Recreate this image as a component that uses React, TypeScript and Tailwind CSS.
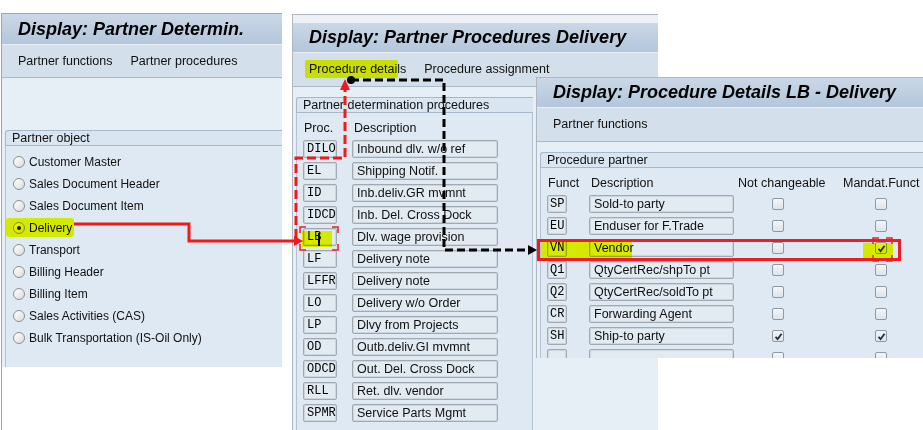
import React from "react";

const partnerObjects = [
  "Customer Master",
  "Sales Document Header",
  "Sales Document Item",
  "Delivery",
  "Transport",
  "Billing Header",
  "Billing Item",
  "Sales Activities (CAS)",
  "Bulk Transportation (IS-Oil Only)",
];

const procedures: [string, string][] = [
  ["DILO", "Inbound dlv. w/o ref"],
  ["EL", "Shipping Notif."],
  ["ID", "Inb.deliv.GR mvmnt"],
  ["IDCD", "Inb. Del. Cross Dock"],
  ["LB", "Dlv. wage provision"],
  ["LF", "Delivery note"],
  ["LFFR", "Delivery note"],
  ["LO", "Delivery w/o Order"],
  ["LP", "Dlvy from Projects"],
  ["OD", "Outb.deliv.GI mvmnt"],
  ["ODCD", "Out. Del. Cross Dock"],
  ["RLL", "Ret. dlv. vendor"],
  ["SPMR", "Service Parts Mgmt"],
];

const partners = [
  { f: "SP", d: "Sold-to party", nc: false, m: false },
  { f: "EU", d: "Enduser for F.Trade", nc: false, m: false },
  { f: "VN", d: "Vendor", nc: false, m: true },
  { f: "Q1", d: "QtyCertRec/shpTo pt", nc: false, m: false },
  { f: "Q2", d: "QtyCertRec/soldTo pt", nc: false, m: false },
  { f: "CR", d: "Forwarding Agent", nc: false, m: false },
  { f: "SH", d: "Ship-to party", nc: true, m: true },
  { f: "", d: "", nc: false, m: false },
];

function TitleBar({ title, h = "h-[31px]" }: { title: string; h?: string }) {
  return (
    <div
      className={`flex ${h} shrink-0 items-center border-b border-[#e9eff5] bg-gradient-to-b from-[#cad8e7] to-[#b3c6db] pl-[16px] text-[18px] font-bold italic text-black`}
    >
      {title}
    </div>
  );
}

function Toolbar({ items, h = "h-[33px]" }: { items: string[]; h?: string }) {
  return (
    <div
      className={`flex ${h} shrink-0 items-center gap-[18px] border-b border-[#a9b9c9] bg-[#d3dfea] pl-[16px] text-[12.5px] text-[#111]`}
    >
      {items.map((t) => (
        <span key={t}>{t}</span>
      ))}
    </div>
  );
}

function GroupHeader({ title }: { title: string }) {
  return (
    <div className="flex h-[16px] shrink-0 items-center rounded-tl-[3px] border-l border-t border-b border-[#a6b8ca] bg-[#d9e5f0] pl-[6px] text-[12.5px] text-[#111]">
      {title}
    </div>
  );
}

function Field({ children, className = "" }: { children?: React.ReactNode; className?: string }) {
  return (
    <div
      className={`flex h-[18px] shrink-0 items-center rounded-[2px] border border-[#a3a9b0] bg-[#e2eaf2] shadow-[inset_0_0_0_1px_#cdd5dd] ${className}`}
    >
      {children}
    </div>
  );
}

function Radio({ on }: { on?: boolean }) {
  return (
    <span className="flex h-[12px] w-[12px] items-center justify-center rounded-full border border-[#8f8f8f] bg-gradient-to-br from-[#ffffff] to-[#dcdcdc]">
      {on && <span className="h-[4px] w-[4px] rounded-full bg-[#1a1a1a]" />}
    </span>
  );
}

function Check({ on }: { on?: boolean }) {
  return (
    <span className="flex h-[12px] w-[12px] items-center justify-center rounded-[2px] border border-[#8e99a4] bg-gradient-to-b from-[#f3f6f9] to-[#dde4eb]">
      {on && (
        <svg width="9" height="9" viewBox="0 0 9 9">
          <path d="M1.5 4.8 L3.6 7 L7.6 1.8" fill="none" stroke="#2b2b33" strokeWidth="1.8" />
        </svg>
      )}
    </span>
  );
}

function Corners({ x, y, w, h, l }: { x: number; y: number; w: number; h: number; l: number }) {
  const d = [
    `M${x} ${y + l} V${y} H${x + l}`,
    `M${x + w - l} ${y} H${x + w} V${y + l}`,
    `M${x} ${y + h - l} V${y + h} H${x + l}`,
    `M${x + w - l} ${y + h} H${x + w} V${y + h - l}`,
  ].join(" ");
  return <path d={d} fill="none" stroke="#ee1c25" strokeWidth="1.5" />;
}

export default function App() {
  const red = "#f01a1a";
  return (
    <div className="relative h-[430px] w-[923px] overflow-hidden bg-white font-['Liberation_Sans',Arial,sans-serif] text-black">
      {/* window 1 */}
      <div className="absolute left-[1px] top-[13px] flex h-[417px] w-[281px] flex-col border-l border-t border-[#a0a6ad]">
        <TitleBar title="Display: Partner Determin." />
        <Toolbar items={["Partner functions", "Partner procedures"]} />
        <div className="flex h-[289px] shrink-0 flex-col bg-[#e6eef6] pl-[3px] pt-[52px]">
          <GroupHeader title="Partner object" />
          <div className="flex flex-1 flex-col border-l border-[#b3c3d3] bg-[#dfe9f3] pl-[7px] pt-[5px]">
            {partnerObjects.map((p) => (
              <div key={p} className="flex h-[22px] shrink-0 items-center gap-[4px] text-[12px] text-[#111]">
                <Radio on={p === "Delivery"} />
                <span>{p}</span>
              </div>
            ))}
          </div>
        </div>
      </div>

      {/* window 2 */}
      <div className="absolute left-[292px] top-[14px] flex h-[416px] w-[366px] flex-col border-l border-t border-[#b0b7bf]">
        <div className="h-[8px] shrink-0 bg-[#edf1f5]" />
        <TitleBar title="Display: Partner Procedures Delivery" h="h-[30px]" />
        <Toolbar items={["Procedure details", "Procedure assignment"]} h="h-[34px]" />
        <div className="flex flex-1 flex-col bg-[#e6eef6] pl-[3px] pt-[10px]">
          <div className="flex w-[237px] flex-1 flex-col">
            <GroupHeader title="Partner determination procedures" />
            <div className="flex flex-1 flex-col border-l border-r border-[#b3c3d3] bg-[#dfe9f3]">
              <div className="flex h-[27px] shrink-0 items-center pl-[7px] pt-[3px] text-[12.5px] text-[#111]">
                <span className="w-[50px]">Proc.</span>
                <span>Description</span>
              </div>
              <div className="flex flex-col gap-[4px]">
                {procedures.map(([c, d]) => (
                  <div key={c} className="flex gap-[15px] pl-[6px]">
                    <Field className="w-[34px] pl-[3px] font-['Liberation_Mono',monospace] text-[12px]">{c}</Field>
                    <Field className="w-[146px] pl-[4px] text-[12.5px] text-[#111]">{d}</Field>
                  </div>
                ))}
              </div>
            </div>
          </div>
        </div>
      </div>

      {/* window 3 */}
      <div className="absolute left-[536px] top-[77px] flex h-[281px] w-[387px] flex-col overflow-hidden border-l border-t border-[#b0b7bf]">
        <TitleBar title="Display: Procedure Details LB - Delivery" h="h-[30px]" />
        <Toolbar items={["Partner functions"]} h="h-[34px]" />
        <div className="flex flex-1 flex-col bg-[#e6eef6] pl-[3px] pt-[10px]">
          <GroupHeader title="Procedure partner" />
          <div className="flex flex-1 flex-col border-l border-[#b3c3d3] bg-[#dfe9f3]">
            <div className="flex h-[27px] shrink-0 items-center pl-[7px] pt-[3px] text-[12.5px] text-[#111]">
              <span className="w-[43px]">Funct</span>
              <span className="w-[147px]">Description</span>
              <span className="w-[105px]">Not changeable</span>
              <span>Mandat.Funct</span>
            </div>
            <div className="flex flex-col gap-[4px]">
              {partners.map((p, i) => (
                <div key={i} className="flex shrink-0 items-center pl-[6px]">
                  <Field className="w-[20px] pl-[2px] font-['Liberation_Mono',monospace] text-[12px]">{p.f}</Field>
                  <Field className="ml-[22px] w-[145px] pl-[4px] text-[12.5px] text-[#111]">{p.d}</Field>
                  <div className="ml-[4px] flex w-[80px] justify-center">
                    <Check on={p.nc} />
                  </div>
                  <div className="ml-[25px] flex w-[76px] justify-center">
                    <Check on={p.m} />
                  </div>
                </div>
              ))}
            </div>
          </div>
        </div>
      </div>

      {/* marker highlights */}
      <div className="absolute left-[6px] top-[218px] h-[19px] w-[68px] rounded-[3px] bg-[#f2ff00] mix-blend-multiply" />
      <div className="absolute left-[305px] top-[60px] h-[18px] w-[93px] rounded-[2px] bg-[#f2ff00] mix-blend-multiply" />
      <div className="absolute left-[302px] top-[231px] h-[16px] w-[30px] bg-[#f2ff00] mix-blend-multiply" />
      <div className="absolute left-[541px] top-[242px] h-[18px] w-[91px] bg-[#f2ff00] mix-blend-multiply" />
      <div className="absolute left-[863px] top-[243px] h-[15px] w-[30px] bg-[#f2ff00] mix-blend-multiply" />

      {/* arrows and marks */}
      <svg className="pointer-events-none absolute inset-0" width="923" height="430">
        <polyline points="74,224 189,224 189,241 295,241" fill="none" stroke={red} strokeWidth="3" />
        <polygon points="303,241 294,236 294,246" fill={red} />
        <polyline
          points="296,238 296,158 345,158 345,88"
          fill="none"
          stroke={red}
          strokeWidth="3"
          strokeDasharray="9 4"
        />
        <polygon points="345,79 340,90 350,90" fill={red} />
        <circle cx="351" cy="80" r="4" fill="#000" />
        <polyline
          points="351,80 444,80 444,250 528,250"
          fill="none"
          stroke="#000"
          strokeWidth="3"
          strokeDasharray="8 4"
        />
        <polygon points="537,250 528,245 528,255" fill="#000" />
        <rect x="538.5" y="240.5" width="361" height="19" fill="none" stroke="#ee1c25" strokeWidth="3" />
        <Corners x={300} y={227} w={38} h={23} l={6} />
        <Corners x={873} y={238} w={19} h={23} l={6} />
        <rect x="318" y="233" width="2" height="13" fill="#000" />
      </svg>
    </div>
  );
}
